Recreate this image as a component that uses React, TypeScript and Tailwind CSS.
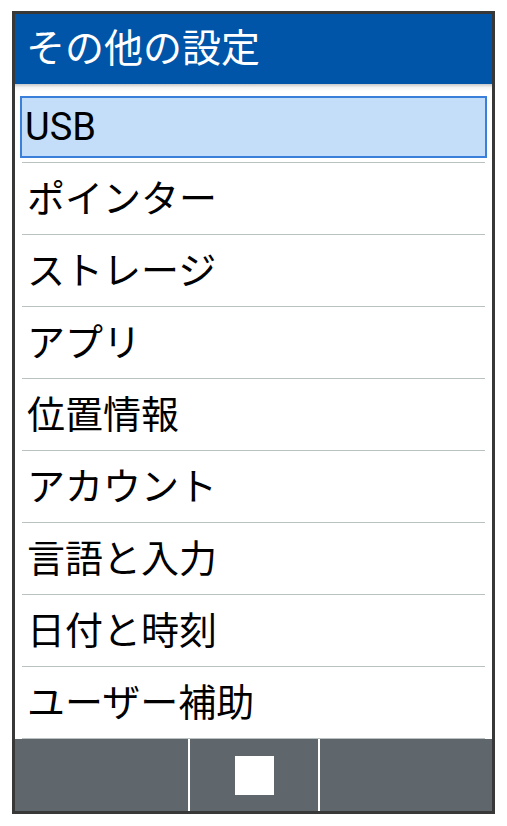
import React from 'react'

const items = ['USB', 'ポインター', 'ストレージ', 'アプリ', '位置情報', 'アカウント', '言語と入力', '日付と時刻', 'ユーザー補助']

export default function App() {
    return (
        <div
            className="w-[507px] h-[826px] bg-white pl-[12px] pt-[11px]"
            style={{ fontFamily: 'Roboto, "Noto Sans CJK JP", sans-serif' }}
        >
            <div className="w-[483px] h-[803px] border-[3px] border-[#383838] bg-white flex flex-col">
                <div className="h-[70px] bg-[#0055a8] flex items-center pl-[11px]">
                    <span className="text-white text-[39px] leading-none">その他の設定</span>
                </div>
                <div className="h-[7px] bg-gradient-to-b from-[#c8c8c8] via-[#f4f4f4] to-white" />
                <div className="flex flex-col">
                    {items.map((label, i) => (
                        <div key={label} className="h-[72px] flex flex-col">
                            <div className="h-[71px] flex items-center px-[5px]">
                                {i === 0 ? (
                                    <div className="w-full h-[62px] border-2 border-[#3a80da] bg-[#c4def9] flex items-center pl-[3px]">
                                        <span className="text-[38px] leading-none text-black">{label}</span>
                                    </div>
                                ) : (
                                    <span className="pl-[7px] text-[38px] leading-none text-black">{label}</span>
                                )}
                            </div>
                            <div className="h-px mx-[7px] bg-[#b9c1c1]" />
                        </div>
                    ))}
                </div>
                <div className="flex-1 bg-[#5f676d] flex">
                    <div className="w-[173px]" />
                    <div className="w-[2px] bg-white" />
                    <div className="w-[128px] flex items-center justify-center">
                        <div className="w-[39px] h-[39px] bg-white" />
                    </div>
                    <div className="w-[2px] bg-white" />
                    <div className="flex-1" />
                </div>
            </div>
        </div>
    )
}
